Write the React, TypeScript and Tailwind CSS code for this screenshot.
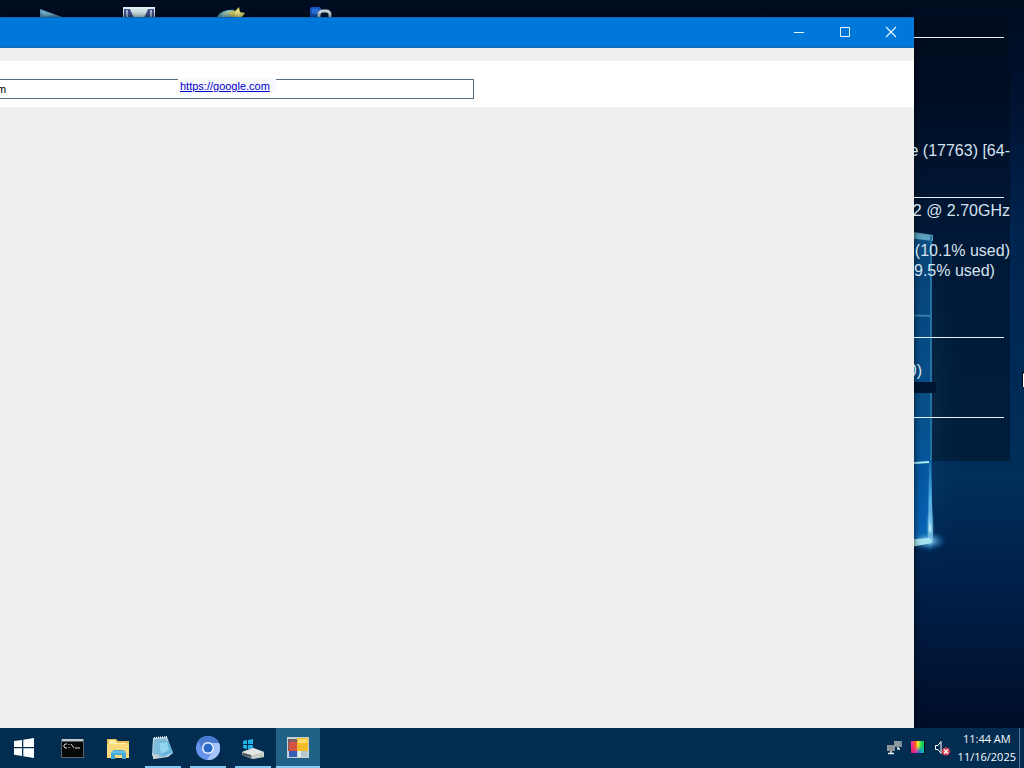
import { useState, type ReactNode } from "react";

type InfoRow = { kind: "rule" | "blank" | "start" | "end" | "cut"; text?: string };

const infoRows: InfoRow[] = [
  { kind: "rule" },
  { kind: "blank" },
  { kind: "blank" },
  { kind: "blank" },
  { kind: "blank" },
  { kind: "blank" },
  { kind: "end", text: "e (17763) [64-" },
  { kind: "blank" },
  { kind: "rule" },
  { kind: "end", text: "2 @ 2.70GHz" },
  { kind: "blank" },
  { kind: "end", text: "(10.1% used)" },
  { kind: "start", text: "9.5% used)" },
  { kind: "blank" },
  { kind: "blank" },
  { kind: "rule" },
  { kind: "blank" },
  { kind: "cut", text: "0)" },
  { kind: "blank" },
  { kind: "rule" },
  { kind: "blank" },
  { kind: "blank" },
];

const rowStyle = {
  rule: "h-5 pt-4",
  blank: "h-5",
  start: "flex h-5 justify-start overflow-hidden",
  end: "flex h-5 justify-end overflow-hidden",
  cut: "flex h-5 w-2 justify-end overflow-hidden",
};

function Wallpaper() {
  return (
    <svg className="absolute inset-0 h-full w-full" viewBox="0 0 1024 728" preserveAspectRatio="xMaxYMin slice" aria-hidden="true">
      <defs>
        <linearGradient id="sky" x1="0" y1="0" x2="0" y2="1">
          <stop offset="0" stopColor="#000c20" />
          <stop offset="0.14" stopColor="#001231" />
          <stop offset="0.32" stopColor="#002450" />
          <stop offset="0.52" stopColor="#002a56" />
          <stop offset="0.66" stopColor="#012e5a" />
          <stop offset="0.8" stopColor="#00204a" />
          <stop offset="1" stopColor="#000d28" />
        </linearGradient>
        <linearGradient id="pane" x1="0" y1="0" x2="0" y2="1">
          <stop offset="0" stopColor="#105584" />
          <stop offset="0.3" stopColor="#064579" />
          <stop offset="1" stopColor="#064e8b" />
        </linearGradient>
        <linearGradient id="lowerpane" x1="0" y1="0" x2="0" y2="1">
          <stop offset="0" stopColor="#084f85" />
          <stop offset="0.45" stopColor="#06579e" />
          <stop offset="1" stopColor="#0867bb" />
        </linearGradient>
        <radialGradient id="glow">
          <stop offset="0" stopColor="#e4ffff" />
          <stop offset="0.25" stopColor="#75c5ed" stopOpacity="0.8" />
          <stop offset="1" stopColor="#0864a8" stopOpacity="0" />
        </radialGradient>
        <linearGradient id="beam" x1="0" y1="0" x2="0" y2="1">
          <stop offset="0" stopColor="#2f86bd" stopOpacity="0.6" />
          <stop offset="0.5" stopColor="#52b4ea" />
          <stop offset="1" stopColor="#e4ffff" />
        </linearGradient>
      </defs>
      <rect width="1024" height="728" fill="url(#sky)" />
      <rect x="820" y="17" width="190" height="444" fill="#000b18" opacity="0.45" />
      <ellipse cx="922" cy="400" rx="40" ry="190" fill="url(#glow)" opacity="0.08" />
      <path d="M800 218 932 236V382H800Z" fill="url(#pane)" />
      <path d="M800 382H936V393H800Z" fill="#001532" />
      <path d="M800 393H932V541L800 558Z" fill="url(#lowerpane)" />
      <path d="M900 230 933 235V241L900 237Z" fill="#72b5cf" opacity="0.8" />
      <path d="M931 236V382M931 393V461" stroke="#2472a2" strokeWidth="2" />
      <path d="M900 315 931 316" stroke="#347fa9" strokeWidth="2" />
      <path d="M900 464 929 462" stroke="#a9f1fa" strokeWidth="2" />
      <path d="M929 462 928 541 933 541 931 462Z" fill="url(#beam)" />
      <ellipse cx="930" cy="528" rx="5" ry="26" fill="url(#glow)" />
      <ellipse cx="928" cy="541" rx="19" ry="10" fill="url(#glow)" />
      <path d="M900 540 930 538 932 543 900 549Z" fill="#a6e4f1" />
      <path d="m1022 373 2-2v17l-2-2Z" fill="#000b18" />
      <path d="M1023 374v13h1v-14Z" fill="#fff" />
    </svg>
  );
}

function DesktopIcons() {
  return (
    <svg className="absolute top-0 left-0 h-5 w-[340px]" viewBox="0 0 340 20" aria-hidden="true">
      <path d="M40 9 62 17v3H40Z" fill="#5d9bc2" />
      <path d="M41 10 55 15 43 17Z" fill="#79b6d3" />
      <path d="M123 7h32v13h-32Z" fill="#e5eef2" />
      <path d="M124 9h6l5 11h-11ZM154 9h-6l-5 11h11Z" fill="#43528e" />
      <path d="M131 9h16l-3 8h-10Z" fill="#d2e6e9" />
      <path d="M127 10v7M151 10v7" stroke="#a7b8d5" strokeWidth="2" />
      <path d="M217 17c3-5 9-8 17-7l4 9h-21Z" fill="#68a7b8" />
      <path d="M223 13c4-3 7-3 10-2l-3 6h-9Z" fill="#9bcabb" />
      <path d="m228 12 7-1 4-4 1 5 5 1-3 4v3h-9Z" fill="#d5cf66" />
      <path d="m235 12 4-2 1 4 3 1-3 3h-5Z" fill="#f1e889" />
      <rect x="310" y="7" width="11" height="12" rx="2" fill="#1756bd" />
      <path d="M312 9h6v5h-6Z" fill="#2873db" />
      <path d="M319 20v-5q0-4 4-4h3q4 0 4 4v5" fill="#071737" stroke="#c7d4dd" strokeWidth="3" />
    </svg>
  );
}

function InfoPanel() {
  return (
    <aside className="relative mt-[21px] w-[110px] shrink-0 pr-3.5 font-['Liberation_Sans',Arial,sans-serif] text-[16px] leading-5 text-[#d5e2ef]">
      {infoRows.map((row, index) => (
        <div key={index} className={rowStyle[row.kind]}>
          {row.kind === "rule" ? (
            <div className="mr-1.5 h-px bg-[#e5f0f8]" />
          ) : (
            row.text && <span className="shrink-0 whitespace-nowrap">{row.text}</span>
          )}
        </div>
      ))}
    </aside>
  );
}

function BrowserWindow() {
  const [address, setAddress] = useState("m");
  const caption = "flex h-full w-[46px] items-center justify-center text-[#e8faff] hover:bg-[#1a89e3]";
  return (
    <section className="relative mt-[17px] flex min-w-0 flex-1 flex-col bg-[#efefef] shadow-[0_0_7px_#000b]" aria-label="Browser">
      <header className="flex h-[31px] justify-end border-t border-b border-t-[#0866b5] border-b-[#176aae] bg-[#0078da] pb-px">
        <button className={caption} aria-label="Minimize">
          <svg className="h-3 w-3" viewBox="0 0 12 12" fill="none" stroke="currentColor"><path d="M1 6.5h10" /></svg>
        </button>
        <button className={caption} aria-label="Maximize">
          <svg className="h-3 w-3" viewBox="0 0 12 12" fill="none" stroke="currentColor"><path d="M1.5 1.5h9v9h-9Z" /></svg>
        </button>
        <button className={caption} aria-label="Close">
          <svg className="h-3 w-3" viewBox="0 0 12 12" fill="none" stroke="currentColor" strokeWidth="1.2"><path d="m1 1 10 10M11 1 1 11" /></svg>
        </button>
      </header>
      <div className="h-[13px]" />
      <div className="h-[46px] bg-white pt-[18px] font-['Liberation_Sans',Arial,sans-serif] text-[11px]">
        <div className="relative w-[474px] overflow-hidden">
          <input
            aria-label="Address"
            className="-ml-1 block h-5 w-[478px] border border-[#526f86] bg-white text-black outline-none"
            value={address}
            onChange={(event) => setAddress(event.target.value)}
          />
          <a href="https://google.com" className="absolute top-0 left-[178px] h-[15px] w-[98px] bg-[#f8f8ff] pl-0.5 leading-[15px] text-[#0000c8] underline">
            https://google.com
          </a>
        </div>
      </div>
    </section>
  );
}

function TaskButton({ label, state = "idle", children }: { label: string; state?: "idle" | "open" | "active"; children: ReactNode }) {
  return (
    <button
      aria-label={label}
      className={
        state === "active"
          ? "flex h-full w-11 flex-col items-center bg-[#206187]"
          : "flex h-full w-11 flex-col items-center hover:bg-[#15466a]"
      }
    >
      <span className="flex flex-1 items-center pt-0.5">{children}</span>
      {state === "open" && <span className="h-0.5 w-9 bg-[#84c8f8]" />}
      {state === "active" && <span className="h-0.5 w-full bg-[#8acbf8]" />}
    </button>
  );
}

function Taskbar() {
  return (
    <footer className="flex h-10 shrink-0 items-center bg-[#032d50] text-white">
      <button className="mr-[3px] flex h-full w-12 items-center justify-center" aria-label="Start">
        <svg className="h-5 w-5" viewBox="0 0 20 20" fill="#fff"><path d="M0 3 8 2v7H0ZM9.3 1.8 20 0v9H9.3ZM0 10.3h8V18l-8-1.2ZM9.3 10.3H20V20L9.3 18.3Z" /></svg>
      </button>
      <nav className="flex h-full gap-px" aria-label="Running applications">
        <TaskButton label="Command Prompt">
          <svg className="h-6 w-6" viewBox="0 0 24 24">
            <rect x="0" y="2" width="23" height="19" fill="#59636a" />
            <path d="M1 5h21v15H1Z" fill="#060707" />
            <path d="M1 2h21v2H1Z" fill="#c5c9cc" />
            <path d="M6 7H4L3 8v2l1 1h2M8 7v1m0 2v1m2-4 3 4m1 0h5" fill="none" stroke="#d7dadb" />
          </svg>
        </TaskButton>
        <TaskButton label="File Explorer">
          <svg className="h-6 w-6" viewBox="0 0 24 24">
            <path d="M1 2h9l2 2h11v17H1Z" fill="#e8bd53" />
            <path d="M3 3h6l2 3h10v12H3Z" fill="#fff0ad" />
            <path d="M1 7h22v14H1Z" fill="#f9db79" />
            <path d="M5 22v-7l3-2h9l3 2v7h-4v-4H9v4Z" fill="#48a9d7" />
            <path d="M5 15h15" stroke="#81d4ef" />
          </svg>
        </TaskButton>
        <TaskButton label="Notepad" state="open">
          <svg className="h-6 w-6" viewBox="0 0 24 24">
            <path d="M2 2 16 1l6 16-5 4-14 2-2-4Z" fill="#b9d3df" />
            <path d="m3 3 12-1 1 18-14 1Z" fill="#80bddb" />
            <path d="m7 6 10-1 5 12-12 3Z" fill="#62b4dd" />
            <path d="m8 7 8-1 2 8-8 4Z" fill="#91d4ed" />
            <path d="m3 2 13-1" stroke="#f4f7f7" strokeWidth="2" strokeDasharray="1 1" />
            <path d="m2 18 6 1-1 3-5 1Z" fill="#c9d0d2" />
          </svg>
        </TaskButton>
        <TaskButton label="Chromium" state="open">
          <svg className="h-6 w-6" viewBox="0 0 24 24">
            <circle cx="12" cy="12" r="12" fill="#6595eb" />
            <path d="M12 0a12 12 0 0 1 11 7H12a5 5 0 0 0-5 7L2 5a12 12 0 0 1 10-5Z" fill="#4779cf" />
            <path d="M23 7a12 12 0 0 1-12 17l6-9a5 5 0 0 0-2-8Z" fill="#a4c4fa" />
            <circle cx="12" cy="12" r="6" fill="#eef5ff" />
            <circle cx="12" cy="12" r="4.5" fill="#286ac6" />
          </svg>
        </TaskButton>
        <TaskButton label="Disk utility" state="open">
          <svg className="h-6 w-6" viewBox="0 0 24 24">
            <path d="m2 5 4-1v4H2Zm5-1 5-1v5H7Zm-5 5h4v4l-4-1Zm5 0h5v5l-5-1Z" fill="#20b1e8" />
            <path d="m1 16 11-4 11 4v5l-12 2-10-4Z" fill="#8b9395" />
            <path d="m1 16 11-4 11 4-12 4Z" fill="#e1e5e4" />
            <path d="m11 20 12-4v5l-12 2Z" fill="#c8cecd" />
            <path d="m2 18 8 2" stroke="#4b565c" strokeWidth="2" />
            <circle cx="20" cy="20" r="1" fill="#85db75" />
          </svg>
        </TaskButton>
        <TaskButton label="Forms application" state="active">
          <svg className="h-6 w-6" viewBox="0 0 24 24">
            <rect x="1" y="1" width="22" height="21" fill="#c4d1d5" />
            <path d="M2 3h9v12H2Z" fill="#785e62" />
            <path d="M3 6h8v9H3Z" fill="#d65342" />
            <path d="M11 2h11v13H11Z" fill="#f4bb2b" />
            <path d="M12 3h9v4h-9Z" fill="#ffdb6a" />
            <path d="M3 15h8v6H3Z" fill="#365db1" />
            <path d="M12 15h9v6h-9Z" fill="#b8c7d0" />
            <path d="M12 15h3v6h-3Z" fill="#e0eef0" />
          </svg>
        </TaskButton>
      </nav>
      <div className="ml-auto flex h-full items-center">
        <div className="mr-2 flex items-center gap-2">
          <button aria-label="Network">
            <svg className="block h-4 w-4" viewBox="0 0 16 16">
              <path d="M8 1h8v6H8Z" fill="#7c8a93" />
              <path d="M9 1v5m2-5v5m2-5v5" stroke="#9ba8ae" />
              <path d="M1 5h8v6H1Z" fill="#8b9499" />
              <path d="M12 7v2h2M5 11v2M2 13.5h6" stroke="#e5eff4" strokeWidth="1.5" fill="none" />
            </svg>
          </button>
          <button aria-label="Display colors">
            <svg className="block h-4 w-4" viewBox="0 0 16 16">
              <defs>
                <linearGradient id="hues"><stop stopColor="#e82ccc" /><stop offset=".3" stopColor="#ff4b20" /><stop offset=".55" stopColor="#f2f52d" /><stop offset=".75" stopColor="#28e754" /><stop offset="1" stopColor="#12b957" /></linearGradient>
                <linearGradient id="lowerhues"><stop stopColor="#e7181c" /><stop offset=".35" stopColor="#d925e0" /><stop offset=".6" stopColor="#1645ef" /><stop offset="1" stopColor="#12c8ed" /></linearGradient>
                <linearGradient id="fade" x2="0" y2="1"><stop offset=".35" stopColor="#000" /><stop offset=".85" stopColor="#fff" /></linearGradient>
                <mask id="lower"><rect width="16" height="16" fill="url(#fade)" /></mask>
              </defs>
              <path d="M1 1h14v14l-3-2H1Z" fill="#07101d" />
              <rect x="1" y="1" width="13" height="12" fill="url(#hues)" />
              <rect x="1" y="1" width="13" height="12" fill="url(#lowerhues)" mask="url(#lower)" />
            </svg>
          </button>
          <button aria-label="Volume muted">
            <svg className="block h-4 w-4" viewBox="0 0 16 16" fill="none">
              <path d="M1.500 5.500H4l3-4v12l-3-4H1.500Z" stroke="#fff" />
              <circle cx="12" cy="11.500" r="4" fill="#d84555" />
              <path d="m10 9.500 4 4m0-4-4 4" stroke="#fff" strokeWidth="1.300" />
            </svg>
          </button>
        </div>
        <button className="flex h-full flex-col items-center justify-center pr-[3px] font-['Open_Sans','Noto_Sans',sans-serif] text-[11px] leading-[18px] text-[#f5fbff]">
          <time dateTime="11:44">11:44 AM</time>
          <time dateTime="2025-11-16">11/16/2025</time>
        </button>
        <button className="h-full w-[5px] border-l border-[#52758e]" aria-label="Show desktop" />
      </div>
    </footer>
  );
}

export default function App() {
  return (
    <div className="flex min-h-screen flex-col overflow-hidden bg-[#001231]">
      <main className="relative flex flex-1 overflow-hidden">
        <Wallpaper />
        <DesktopIcons />
        <BrowserWindow />
        <InfoPanel />
      </main>
      <Taskbar />
    </div>
  );
}
